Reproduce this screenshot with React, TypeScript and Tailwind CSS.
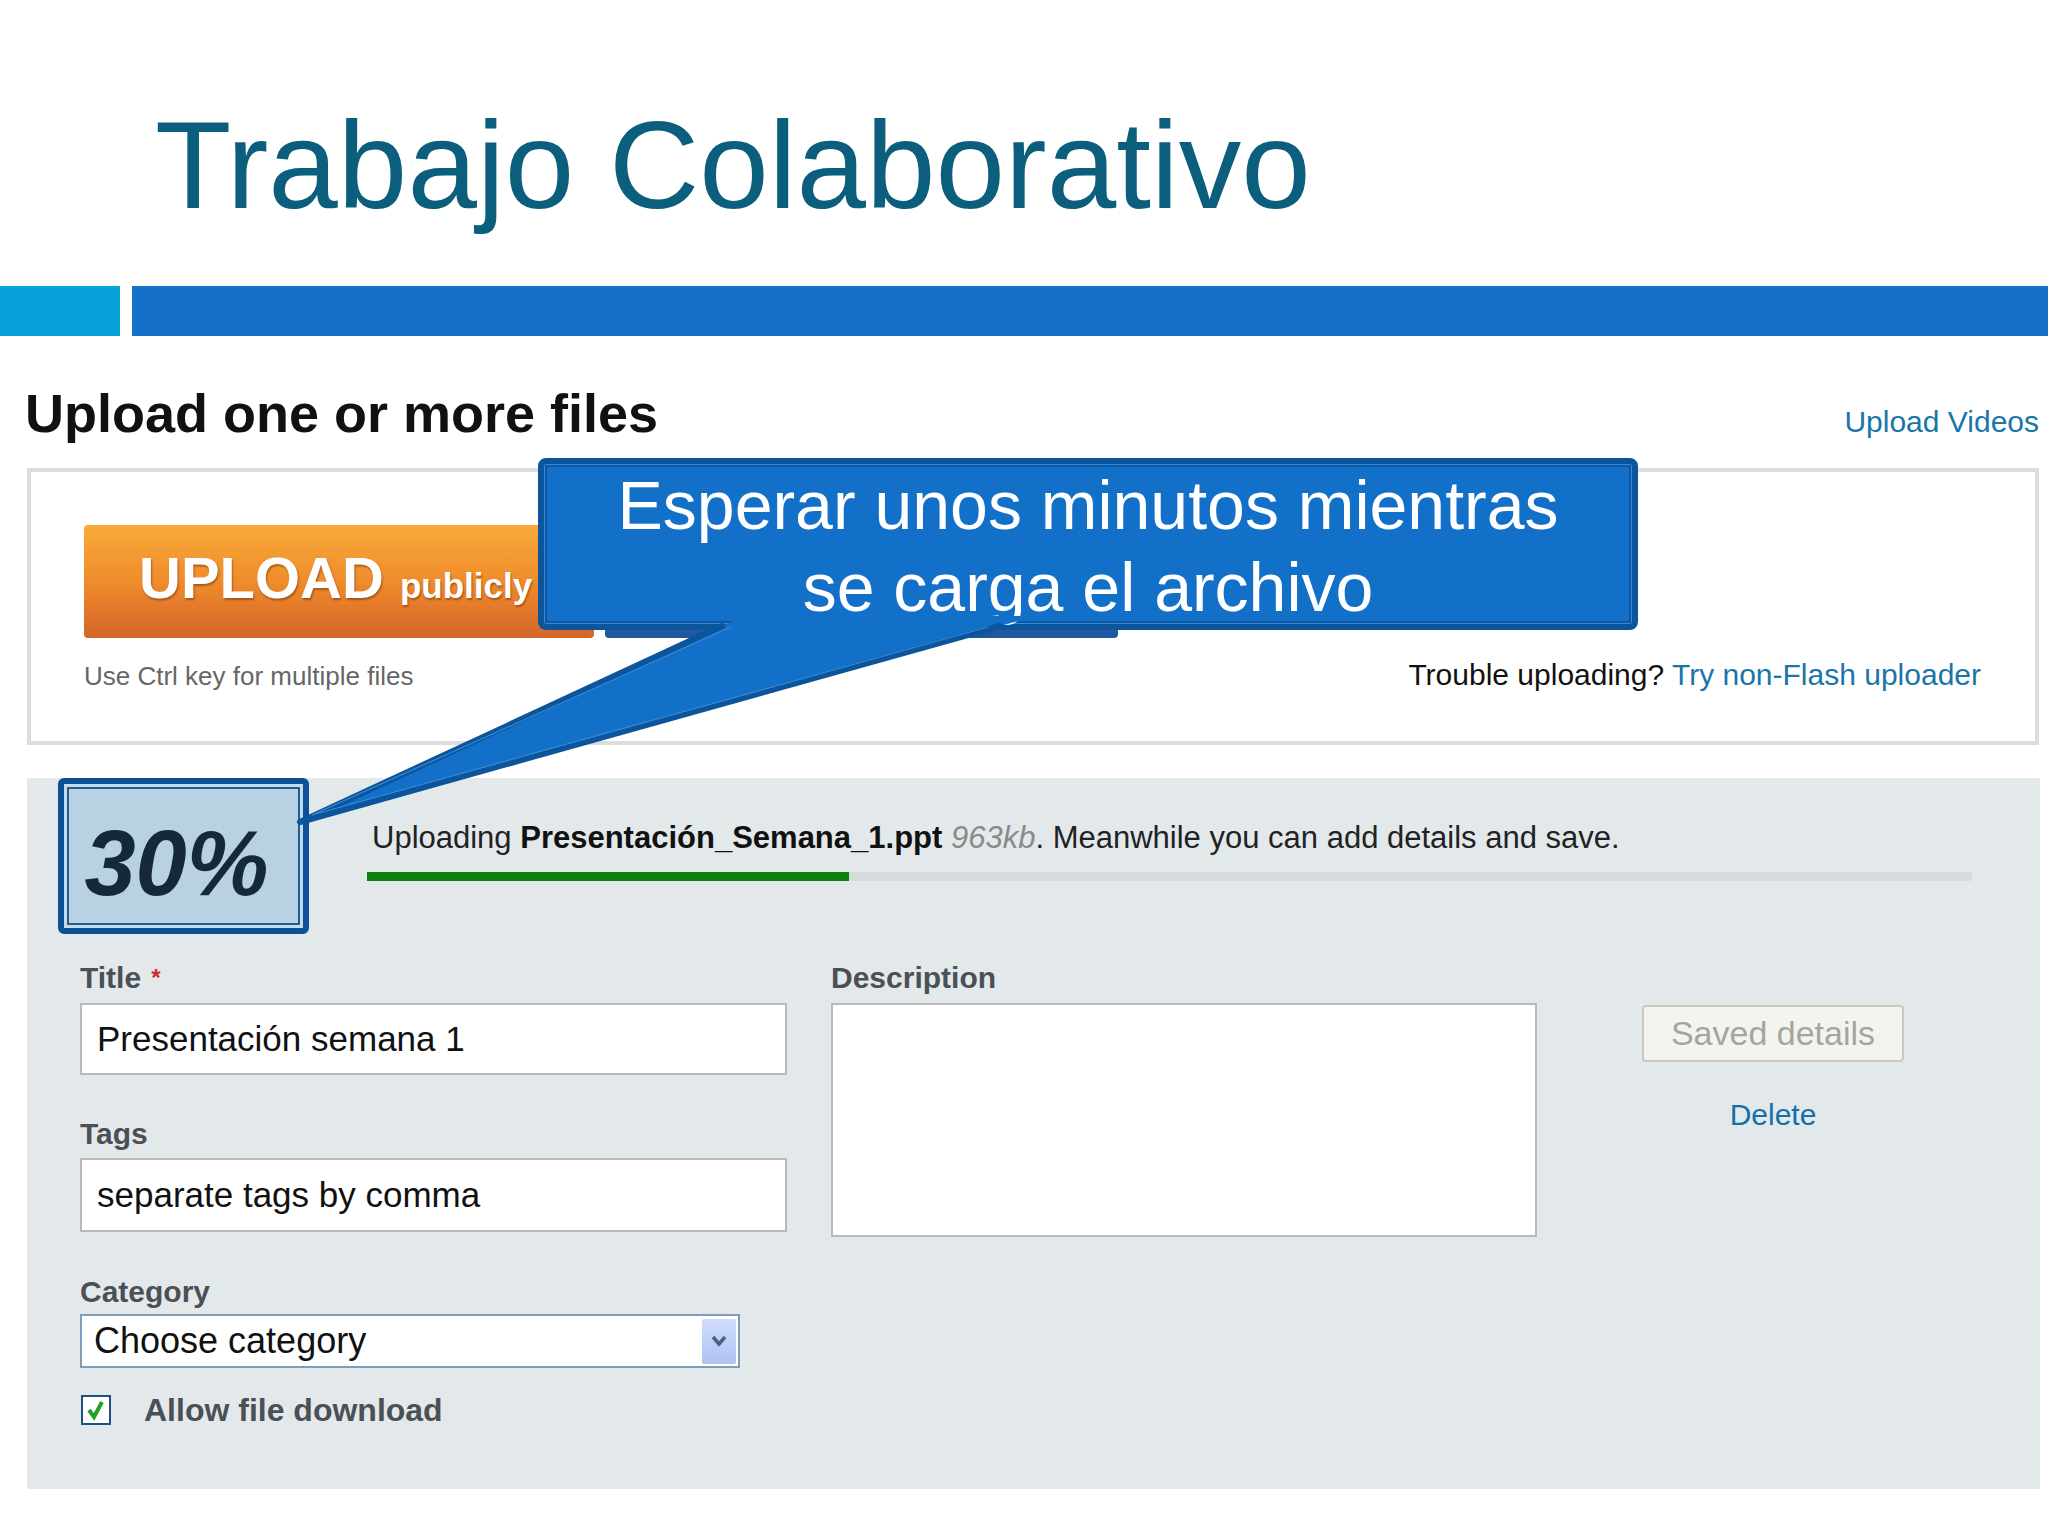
export default function App() {
  return (
    <div className="relative w-[2048px] h-[1536px] overflow-hidden bg-white font-['Liberation_Sans',Arial,sans-serif]">
      <h1 className="pt-[102px] pl-[155px] text-[125px] leading-[126px] text-[#0b5f7c]">Trabajo Colaborativo</h1>

      <div className="mt-[58px] flex h-[50px] gap-[12px]">
        <div className="w-[120px] bg-[#0aa0da]" />
        <div className="flex-1 bg-[#1470c8]" />
      </div>

      <div className="mt-[50px] flex items-baseline justify-between pl-[25px] pr-[9px]">
        <h2 className="text-[54px] leading-[54px] font-bold text-[#111]">Upload one or more files</h2>
        <span className="text-[30px] text-[#1a75a8]">Upload Videos</span>
      </div>

      <div className="mt-[24px] ml-[27px] w-[2012px] h-[277px] border-[4px] border-[#dcdcdc] pl-[53px] pt-[53px] pr-[54px]">
        <div className="flex gap-[11px]">
          <div className="w-[510px] h-[113px] rounded-[4px] bg-linear-to-b from-[#f8aa3a] via-[#ef8c2c] to-[#d5652a] flex items-baseline pl-[55px] pt-[24px] text-white font-bold [text-shadow:1px_2px_2px_rgba(120,50,0,0.55)]">
            <span className="text-[58px] leading-[58px]">UPLOAD</span>
            <span className="ml-[16px] text-[35px] leading-[35px]">publicly</span>
          </div>
          <div className="w-[513px] h-[113px] rounded-[4px] bg-linear-to-b from-[#3a78c0] to-[#1d589f]" />
        </div>
        <div className="mt-[22px] flex items-baseline justify-between">
          <span className="text-[26px] leading-[30px] text-[#666]">Use Ctrl key for multiple files</span>
          <span className="text-[30px] leading-[30px] text-[#111]">
            Trouble uploading? <span className="text-[#1a75a8]">Try non-Flash uploader</span>
          </span>
        </div>
      </div>

      <div className="mt-[33px] ml-[27px] w-[2013px] h-[711px] bg-[#e3e9eb]">
        <div className="flex">
          <div className="ml-[31px] w-[251px] h-[156px] rounded-[6px] border-[6px] border-[#0c5196] p-[3px] bg-[#c6dbea]">
            <div className="h-full border-[2px] border-[#1f5d9a] bg-[#b8d2e4] flex items-center justify-center pr-[14px] pt-[14px]">
              <span className="text-[92px] leading-[92px] font-bold italic text-[#15283c]">30%</span>
            </div>
          </div>
          <div className="ml-[58px] pt-[42px]">
            <div className="pl-[5px] text-[31px] leading-[36px] text-[#222]">
              Uploading <span className="font-bold text-[#111]">Presentación_Semana_1.ppt</span>{" "}
              <span className="italic text-[#8a8a8a]">963kb</span>. Meanwhile you can add details and save.
            </div>
            <div className="mt-[16px] w-[1605px] h-[9px] bg-[#d6dcdc] rounded-[2px]">
              <div className="w-[482px] h-full bg-[#0d7f0d]" />
            </div>
          </div>
        </div>

        <div className="mt-[27px] flex pl-[53px]">
          <div className="w-[707px] flex flex-col">
            <div className="text-[30px] leading-[34px] font-bold text-[#4b5056]">
              Title<span className="ml-[10px] align-top text-[24px] text-[#d42a2a]">*</span>
            </div>
            <div className="mt-[8px] h-[72px] border-2 border-[#b9b9b9] bg-white pl-[15px] flex items-center text-[35px] text-[#111]">
              Presentación semana 1
            </div>
            <div className="mt-[42px] text-[30px] leading-[34px] font-bold text-[#4b5056]">Tags</div>
            <div className="mt-[7px] h-[74px] border-2 border-[#b9b9b9] bg-white pl-[15px] flex items-center text-[35px] text-[#111]">
              separate tags by comma
            </div>
            <div className="mt-[43px] text-[30px] leading-[34px] font-bold text-[#4b5056]">Category</div>
            <div className="mt-[5px] w-[660px] h-[54px] border-2 border-[#7f9db9] bg-white pl-[12px] flex items-center text-[36px] text-[#111]">
              <span>Choose category</span>
              <div className="ml-auto mr-[2px] w-[34px] h-[45px] rounded-[2px] bg-linear-to-b from-[#d0ddfd] to-[#aec2f3] flex items-center justify-center">
                <svg width="16" height="12" viewBox="0 0 16 12">
                  <path d="M2 2 L8 9 L14 2" fill="none" stroke="#4d6185" strokeWidth="3.5" />
                </svg>
              </div>
            </div>
            <div className="mt-[24px] flex items-center">
              <div className="ml-[1px] w-[30px] h-[30px] border-2 border-[#1c5180] bg-white flex items-center justify-center">
                <svg width="22" height="22" viewBox="0 0 22 22">
                  <path d="M4 11 L9 18 L17 3" fill="none" stroke="#22a322" strokeWidth="4" />
                </svg>
              </div>
              <span className="ml-[33px] text-[32px] leading-[36px] font-bold text-[#4b5056]">Allow file download</span>
            </div>
          </div>

          <div className="ml-[44px] w-[706px] flex flex-col">
            <div className="text-[30px] leading-[34px] font-bold text-[#4b5056]">Description</div>
            <div className="mt-[8px] h-[234px] border-2 border-[#b9b9b9] bg-white" />
          </div>

          <div className="ml-[105px] w-[262px] pt-[44px] flex flex-col">
            <div className="h-[57px] rounded-[4px] border-2 border-[#c9c9c0] bg-[#f4f4ee] flex items-center justify-center text-[34px] text-[#a5a5a0]">
              Saved details
            </div>
            <div className="mt-[36px] text-center text-[30px] leading-[34px] text-[#1670a8]">Delete</div>
          </div>
        </div>
      </div>

      <div className="absolute left-[538px] top-[458px] w-[1100px] h-[172px] rounded-[8px] border-[6px] border-[#0b559d] bg-[#1270c8] shadow-[inset_0_0_0_1px_#3a88d2,inset_0_0_0_3px_#0c58a2] text-center text-white text-[68px] leading-[82px]">
        <div>Esperar unos minutos mientras</div>
        <div>se carga el archivo</div>
      </div>

      <svg className="absolute left-0 top-0 pointer-events-none" width="2048" height="1536" viewBox="0 0 2048 1536">
        <polygon points="744,616 300,822 1036,616" fill="#1270c8" />
        <polyline points="722,626 300,822 1000,626" fill="none" stroke="#0b559d" strokeWidth="6" strokeLinejoin="round" strokeLinecap="round" />
        <polyline points="731,627 312,815 988,627" fill="none" stroke="#3a88d2" strokeWidth="1.2" />
      </svg>
    </div>
  );
}
